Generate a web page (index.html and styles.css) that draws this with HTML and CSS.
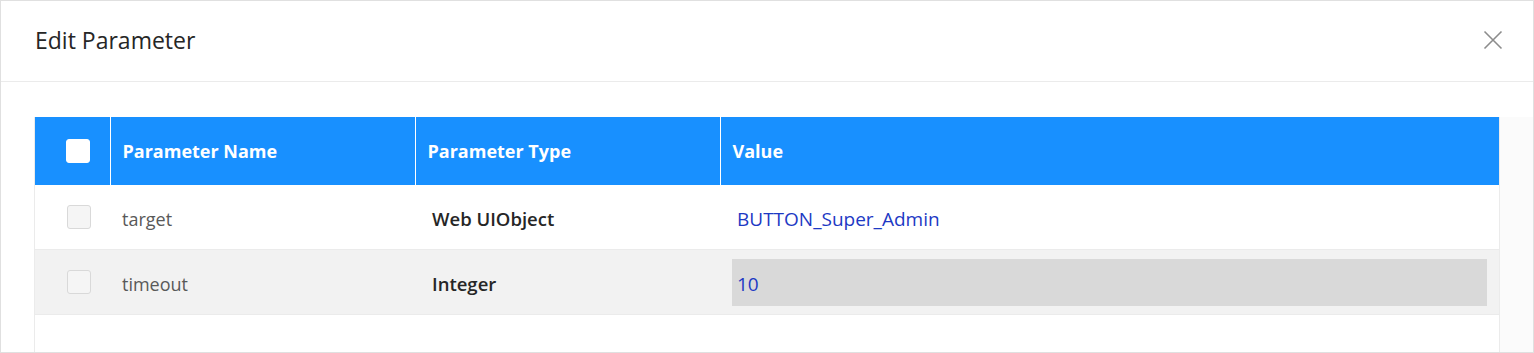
FILE: index.html
```html
<!DOCTYPE html>
<html lang="en">
<head>
    <meta charset="UTF-8">
    <title>Edit Parameter</title>
    <link rel="stylesheet" href="styles.css">
</head>
<body>
    <div class="modal">
        <div class="modal-header">
            <h1 class="modal-title">Edit Parameter</h1>
            <button class="close-btn" aria-label="Close">
                <svg width="20" height="20" viewBox="0 0 20 20">
                    <path d="M1.5 1.5 L18.5 18.5 M18.5 1.5 L1.5 18.5" stroke="#8c8c8c" stroke-width="1.6" fill="none"/>
                </svg>
            </button>
        </div>

        <div class="modal-body">
            <div class="table-wrap">
                <table class="param-table">
                    <thead>
                        <tr>
                            <th class="col-check"><span class="checkbox checkbox-head"></span></th>
                            <th class="col-name">Parameter Name</th>
                            <th class="col-type">Parameter Type</th>
                            <th class="col-value">Value</th>
                        </tr>
                    </thead>
                    <tbody>
                        <tr>
                            <td class="col-check"><span class="checkbox"></span></td>
                            <td class="col-name">target</td>
                            <td class="col-type type-text">Web UIObject</td>
                            <td class="col-value"><span class="value-field">BUTTON_Super_Admin</span></td>
                        </tr>
                        <tr class="row-alt">
                            <td class="col-check"><span class="checkbox"></span></td>
                            <td class="col-name">timeout</td>
                            <td class="col-type type-text">Integer</td>
                            <td class="col-value"><span class="value-field editing">10</span></td>
                        </tr>
                    </tbody>
                </table>
            </div>
            <div class="gutter"></div>
        </div>
    </div>
</body>
</html>
```

FILE: styles.css
```css
html, body {
    margin: 0;
    padding: 0;
    background-color: #fff;
}

body {
    font-family: 'Open Sans', 'Noto Sans', sans-serif;
    color: #262626;
}

.modal {
    box-sizing: border-box;
    width: 1534px;
    height: 353px;
    border: 1px solid #e0e0e0;
    display: flex;
    flex-direction: column;
    overflow: hidden;
}

.modal-header {
    display: flex;
    align-items: center;
    justify-content: space-between;
    height: 80px;
    padding: 0 27px 0 34px;
    border-bottom: 1px solid #ebebeb;
    flex-shrink: 0;
}

.modal-title {
    margin: 0 0 2px;
    font-size: 23px;
    font-weight: 400;
    color: #262626;
    line-height: 1;
}

.close-btn {
    background: none;
    border: none;
    padding: 0;
    width: 26px;
    height: 26px;
    margin-bottom: 2px;
    display: flex;
    align-items: center;
    justify-content: center;
    cursor: pointer;
}

.modal-body {
    flex: 1;
    display: flex;
    padding-top: 35px;
    padding-left: 33px;
}

.table-wrap {
    flex: 1;
    border-left: 1px solid #ebebeb;
    border-right: 1px solid #ebebeb;
}

.gutter {
    width: 33px;
    background-color: #fbfbfb;
}

.param-table {
    width: 100%;
    border-collapse: collapse;
    table-layout: fixed;
    font-size: 18px;
}

.param-table th {
    background-color: #1890ff;
    color: #fff;
    font-weight: 700;
    font-size: 18px;
    text-align: left;
    height: 68px;
    padding: 0 12px;
    border-left: 1px solid #fff;
}

.param-table th:first-child {
    border-left: none;
}

.param-table td {
    height: 61px;
    padding: 3px 12px 0;
    border-bottom: 1px solid #ebebeb;
    color: #595959;
}

.param-table .row-alt td {
    background-color: #f2f2f2;
}

.param-table th.col-check {
    width: 75px;
    box-sizing: border-box;
    padding: 0 0 0 31px;
}

.param-table td.col-check {
    padding: 0 0 0 32px;
}

.param-table td.col-value {
    padding: 0 12px;
}

.param-table th.col-name,
.param-table th.col-type {
    width: 280px;
}

.param-table td.type-text {
    color: #262626;
    font-weight: 600;
    font-size: 18.5px;
    padding-left: 17px;
}

.checkbox {
    display: block;
    box-sizing: border-box;
    width: 24px;
    height: 24px;
    border-radius: 3px;
    background-color: #f5f5f5;
    border: 1px solid #d9d9d9;
}

.checkbox-head {
    background-color: #fff;
    border: 1px solid #fff;
}

.value-field {
    display: flex;
    align-items: center;
    height: 44px;
    padding: 3px 0 0 5px;
    font-size: 19px;
    color: #1d39c4;
}

.value-field.editing {
    background-color: #d9d9d9;
}
```
